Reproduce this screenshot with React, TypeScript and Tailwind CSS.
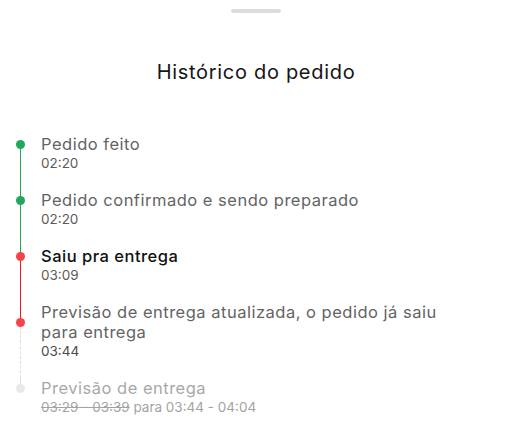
import React from "react";

type Step = {
  title: React.ReactNode;
  time: React.ReactNode;
  dot: string;
  above: string;
  below: string;
  titleClass: string;
  timeClass: string;
  last?: boolean;
};

const GREEN = "border-[#1fa85c]";
const RED = "border-[#ee1c25]";
const DASH = "border-dashed border-[#dedede]";
const NONE = "border-transparent";

const steps: Step[] = [
  {
    title: "Pedido feito",
    time: "02:20",
    dot: "bg-[#21a65d]",
    above: NONE,
    below: GREEN,
    titleClass: "text-[#646464]",
    timeClass: "text-[#5a5a5a]",
  },
  {
    title: "Pedido confirmado e sendo preparado",
    time: "02:20",
    dot: "bg-[#21a65d]",
    above: GREEN,
    below: GREEN,
    titleClass: "text-[#646464]",
    timeClass: "text-[#5a5a5a]",
  },
  {
    title: "Saiu pra entrega",
    time: "03:09",
    dot: "bg-[#f5434b]",
    above: GREEN,
    below: RED,
    titleClass: "text-[#111111] font-medium",
    timeClass: "text-[#5a5a5a]",
  },
  {
    title: "Previsão de entrega atualizada, o pedido já saiu para entrega",
    time: "03:44",
    dot: "bg-[#f5434b]",
    above: RED,
    below: DASH,
    titleClass: "text-[#646464]",
    timeClass: "text-[#4a4a4a]",
  },
  {
    title: "Previsão de entrega",
    time: (
      <>
        <span className="line-through">03:29 - 03:39</span> para 03:44 - 04:04
      </>
    ),
    dot: "bg-[#e8e8e8]",
    above: DASH,
    below: NONE,
    titleClass: "text-[#a8a8a8]",
    timeClass: "text-[#a3a3a3]",
    last: true,
  },
];

function TimelineItem({ step }: { step: Step }) {
  return (
    <div className="grid grid-cols-[41px_1fr]">
      <div className="flex flex-col items-center">
        <div className={`flex-1 border-l ${step.above}`} />
        <div className={`h-[9px] w-[9px] shrink-0 rounded-full ${step.dot}`} />
        <div className={`flex-1 border-l ${step.below}`} />
      </div>
      <p
        className={`max-w-[410px] text-[16.5px] leading-[20px] tracking-[0.5px] ${step.titleClass}`}
      >
        {step.title}
      </p>
      <div className="flex justify-center">
        <div className={`border-l ${step.below}`} />
      </div>
      <p
        className={`text-[13.5px] leading-[18px] ${step.last ? "" : "pb-[18px]"} ${step.timeClass}`}
      >
        {step.time}
      </p>
    </div>
  );
}

export default function App() {
  return (
    <div className="h-[434px] w-[512px] overflow-hidden bg-white font-['Inter','Liberation_Sans',sans-serif]">
      <div className="mx-auto mt-[9px] h-[4px] w-[50px] rounded-full bg-[#dcdcdc]" />
      <h1 className="mt-[47px] text-center text-[20px] leading-[24px] tracking-[0.7px] text-[#151515]">
        Histórico do pedido
      </h1>
      <div className="mt-[50px]">
        {steps.map((s, i) => (
          <TimelineItem key={i} step={s} />
        ))}
      </div>
    </div>
  );
}
